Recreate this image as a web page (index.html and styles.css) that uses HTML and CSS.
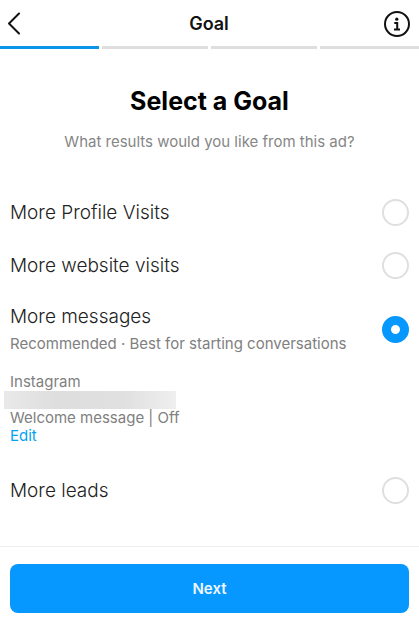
FILE: index.html
```html
<!DOCTYPE html>
<html lang="en">
<head>
    <meta charset="UTF-8">
    <meta name="viewport" content="width=device-width, initial-scale=1.0">
    <title>Goal</title>

    <link rel="stylesheet" href="styles.css">
</head>
<body>
    <header class="topbar">
        <button class="icon-btn" type="button" aria-label="Back">
            <svg width="13" height="24" viewBox="0 0 13 24" fill="none" stroke="#111" stroke-width="2" stroke-linecap="round" stroke-linejoin="round">
                <path d="M11 1.5 L1 11.5 L11 21.5"/>
            </svg>
        </button>
        <h1>Goal</h1>
        <button class="icon-btn" type="button" aria-label="Information">
            <svg width="26" height="26" viewBox="0 0 26 26" fill="none" stroke="#111" stroke-width="2">
                <circle cx="13" cy="13" r="12"/>
                <circle cx="12.8" cy="8.2" r="1.6" fill="#111" stroke="none"/>
                <path d="M10.3 12 H13.2 V18.2 M10 18.4 H16"/>
            </svg>
        </button>
    </header>

    <div class="progress">
        <span class="done"></span>
        <span></span>
        <span></span>
        <span></span>
    </div>

    <main>
        <div class="intro">
            <h2>Select a Goal</h2>
            <p>What results would you like from this ad?</p>
        </div>

        <form id="goalForm">
            <label class="option">
                <span class="name">More Profile Visits</span>
                <input type="radio" name="goal" value="profile">
            </label>
            <label class="option">
                <span class="name">More website visits</span>
                <input type="radio" name="goal" value="website">
            </label>
            <label class="option">
                <span class="text">
                    <span class="name">More messages</span>
                    <span class="hint">Recommended · Best for starting conversations</span>
                </span>
                <input type="radio" name="goal" value="messages" checked>
            </label>
            <div class="details">
                <p>Instagram</p>
                <div class="account"></div>
                <p>Welcome message | Off</p>
                <a href="#">Edit</a>
            </div>
            <label class="option">
                <span class="name">More leads</span>
                <input type="radio" name="goal" value="leads">
            </label>
        </form>
    </main>

    <footer>
        <button class="next" type="submit" form="goalForm">Next</button>
    </footer>
</body>
</html>
```

FILE: styles.css
```css
*{
    margin: 0;
    padding: 0;
    box-sizing: border-box;
}

body{
    min-height: 100vh;
    display: flex;
    flex-direction: column;
    background: #fff;
    color: #222;
    font-family: Inter, "Liberation Sans", sans-serif;
    font-size: 15px;
    line-height: 18px;
}

button{
    border: none;
    background: none;
    font-family: inherit;
    cursor: pointer;
}

/* top bar */
.topbar{
    display: grid;
    grid-template-columns: 1fr auto 1fr;
    align-items: center;
    height: 46px;
    padding: 2px 9px 0 8px;
}
.topbar h1{
    font-size: 18px;
    font-weight: 600;
    line-height: 24px;
    color: #111;
}
.icon-btn{
    display: flex;
    justify-self: start;
}
.icon-btn:last-child{
    justify-self: end;
}

.progress{
    display: grid;
    grid-template-columns: 14fr 15fr 15fr 14fr;
    gap: 3px;
}
.progress span{
    height: 3px;
    background: #dedede;
}
.progress .done{
    background: #0a95e8;
}

/* content */
main{
    flex: 1;
}
.intro{
    padding: 36px 10px 35px;
    text-align: center;
}
.intro h2{
    margin-bottom: 16px;
    font-size: 25px;
    font-weight: 700;
    line-height: 32px;
    color: #000;
}
.intro p{
    color: #868686;
}

.option{
    display: flex;
    align-items: center;
    justify-content: space-between;
    padding: 13px 10px;
    cursor: pointer;
}
.name{
    font-size: 19px;
    font-weight: 300;
    line-height: 24px;
}
.text{
    display: flex;
    flex-direction: column;
    gap: 6px;
}
.hint{
    color: #808080;
}
.option input{
    appearance: none;
    flex: none;
    width: 27px;
    height: 27px;
    border: 2px solid #dfdfdf;
    border-radius: 50%;
    background: #fff;
    cursor: pointer;
}
.option input:checked{
    border: 9px solid #0697ff;
}

.details{
    padding: 7px 10px 19px;
    color: #808080;
}
.details a{
    display: inline-block;
    color: #00a3f0;
    text-decoration: none;
}
.account{
    width: 172px;
    height: 18px;
    margin-left: -6px;
    background: linear-gradient(90deg, #e9e9e9, #dedede 30%, #e0e0e0 70%, #efefef);
}

footer{
    padding: 17px 10px 11px;
    border-top: 1px solid #eee;
}
.next{
    width: 100%;
    height: 49px;
    border-radius: 8px;
    background: #0697ff;
    color: #eef7ff;
    font-size: 15px;
    font-weight: 600;
}
```
